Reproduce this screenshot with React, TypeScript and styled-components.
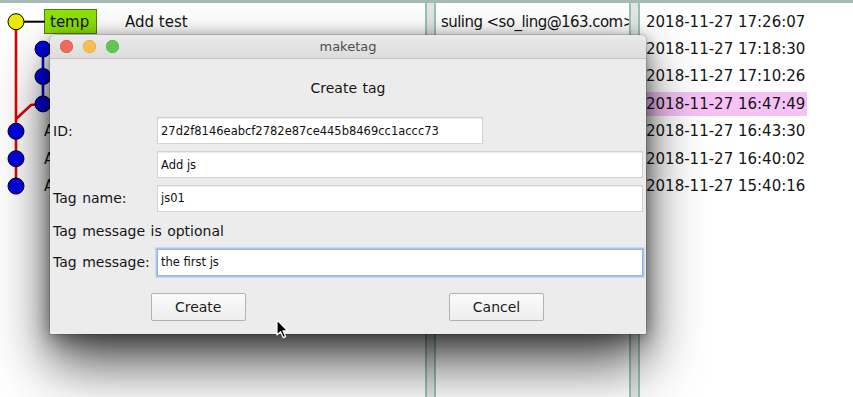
import React from "react";
import styled, { createGlobalStyle } from "styled-components";

const GlobalStyle = createGlobalStyle`
  html, body { margin: 0; padding: 0; background: #ffffff; }
  body { font-family: "DejaVu Sans", "Liberation Sans", sans-serif; }
  * { box-sizing: border-box; }
`;

const Screen = styled.div`
  position: relative;
  width: 853px;
  height: 397px;
  overflow: hidden;
  background: #ffffff;
  display: flex;
  flex-direction: column;
`;

const TopEdge = styled.div`
  flex: none;
  height: 3px;
  background: #a5bcb5;
`;

const Panes = styled.div`
  flex: 1;
  display: flex;
  min-height: 0;
`;

const Pane = styled.div<{ $width?: number; $borderLeft?: boolean; $borderRight?: boolean; $padLeft: number }>`
  position: relative;
  flex: ${(p) => (p.$width ? `0 0 ${p.$width}px` : "1 1 auto")};
  background: #ffffff;
  border-left: ${(p) => (p.$borderLeft ? "2px solid #96c4b6" : "none")};
  border-right: ${(p) => (p.$borderRight ? "2px solid #96c4b6" : "none")};
  overflow: hidden;
  padding-top: 5px;
  padding-left: ${(p) => p.$padLeft}px;
  font-size: 15px;
  color: #141414;
`;

const Sash = styled.div`
  flex: 0 0 7px;
  background: #e2e6e4;
`;

const Row = styled.div<{ $indent?: number; $tight?: boolean }>`
  display: flex;
  align-items: center;
  height: 27.4px;
  padding-left: ${(p) => p.$indent ?? 0}px;
  white-space: nowrap;
  letter-spacing: ${(p) => (p.$tight ? "-0.55px" : "0")};
`;

const TagBox = styled.span`
  display: inline-flex;
  align-items: center;
  width: 53px;
  height: 25px;
  padding-left: 5px;
  background: #8ee204;
  border: 1px solid #557f08;
  color: #111;
  margin-right: 28px;
`;

const DateCell = styled.span<{ $hi?: boolean }>`
  display: inline-block;
  height: 24px;
  line-height: 24px;
  padding: 0 2px 0 3px;
  background: ${(p) => (p.$hi ? "#f6c2f6" : "transparent")};
`;

const Graph = styled.svg`
  position: absolute;
  left: 0;
  top: 0;
`;

/* ---------- dialog ---------- */

const Dialog = styled.div`
  position: absolute;
  z-index: 2;
  left: 50px;
  top: 35px;
  width: 596px;
  height: 299px;
  display: flex;
  flex-direction: column;
  border-radius: 5px 5px 0 0;
  background: #ececec;
  box-shadow: 0 0 0 1px rgba(0, 0, 0, 0.14), 0 0 14px rgba(0, 0, 0, 0.22),
    0 10px 22px rgba(0, 0, 0, 0.3), 0 30px 56px rgba(0, 0, 0, 0.68);
`;

const TitleBar = styled.div`
  flex: none;
  height: 24px;
  display: grid;
  grid-template-columns: 1fr auto 1fr;
  align-items: center;
  border-radius: 5px 5px 0 0;
  background: linear-gradient(#ebebeb, #dcdcdc);
  border-bottom: 1px solid #c4c4c4;
`;

const Lights = styled.div`
  display: flex;
  gap: 10px;
  padding-left: 9.5px;
`;

const Light = styled.span<{ $color: string; $edge: string }>`
  width: 13px;
  height: 13px;
  border-radius: 50%;
  background: ${(p) => p.$color};
  box-shadow: inset 0 0 0 0.5px ${(p) => p.$edge};
`;

const Title = styled.div`
  font-size: 13px;
  color: #4e4e4e;
`;

const Body = styled.div`
  flex: 1;
  display: flex;
  flex-direction: column;
  padding: 20px 3px 13px 3px;
  font-size: 14px;
  word-spacing: 1px;
  color: #161616;
`;

const Heading = styled.div`
  text-align: center;
  line-height: 18px;
`;

const FieldRow = styled.div<{ $gap: number }>`
  display: grid;
  grid-template-columns: 104px 1fr;
  align-items: center;
  margin-top: ${(p) => p.$gap}px;
`;

const Label = styled.div`
  line-height: 18px;
  white-space: nowrap;
`;

const Note = styled.div<{ $gap: number }>`
  line-height: 18px;
  margin-top: ${(p) => p.$gap}px;
`;

const Field = styled.input<{ $width?: number; $focus?: boolean }>`
  display: block;
  width: ${(p) => (p.$width ? `${p.$width}px` : "100%")};
  height: 27px;
  margin: 0;
  padding: 0 3px;
  border: 1px solid ${(p) => (p.$focus ? "#94b6e6" : "#d2d2d2")};
  box-shadow: ${(p) => (p.$focus ? "0 0 0 1.5px #a9c5ee" : "inset 0 1px 0 #ececec")};
  background: #ffffff;
  font-family: "DejaVu Sans", "Liberation Sans", sans-serif;
  font-size: 11.5px;
  word-spacing: 0;
  color: #111;
  outline: none;
`;

const ButtonRow = styled.div<{ $gap: number }>`
  display: flex;
  justify-content: space-between;
  padding: 0 99px 0 97.7px;
  margin-top: ${(p) => p.$gap}px;
`;

const Button = styled.button`
  width: 95px;
  height: 28px;
  margin: 0;
  padding: 0;
  border: 1px solid #b2b2b2;
  border-radius: 2px;
  background: linear-gradient(#fbfbfb, #eeeeee);
  font-family: "DejaVu Sans", "Liberation Sans", sans-serif;
  font-size: 14px;
  color: #1c1c1c;
`;

const Cursor = styled.svg`
  position: absolute;
  z-index: 3;
  left: 276px;
  top: 319px;
`;

const leftRows = [
  { indent: 70, text: "Add css" },
  { indent: 70, text: "Add html" },
  { indent: 70, text: "Add readme" },
  { indent: 44, text: "Add index" },
  { indent: 44, text: "Add main" },
  { indent: 44, text: "Add a.txt" },
];

const dates = [
  "2018-11-27 17:26:07",
  "2018-11-27 17:18:30",
  "2018-11-27 17:10:26",
  "2018-11-27 16:47:49",
  "2018-11-27 16:43:30",
  "2018-11-27 16:40:02",
  "2018-11-27 15:40:16",
];

const ys = [18.7, 46.1, 73.5, 100.9, 128.3, 155.7, 183.1];

export default function App() {
  return (
    <>
      <GlobalStyle />
      <Screen>
        <TopEdge />
        <Panes>
          <Pane $width={427} $borderRight $padLeft={0}>
            <Graph width="60" height="200" viewBox="0 0 60 200">
              <line x1="16" y1={ys[0]} x2="16" y2={ys[6]} stroke="#e00000" strokeWidth="2.6" />
              <polyline points={`16,116 31,102 43,${ys[3]}`} fill="none" stroke="#e00000" strokeWidth="2.6" />
              <line x1="43" y1={ys[1]} x2="43" y2={ys[3]} stroke="#0000e0" strokeWidth="2.6" />
              <line x1="22" y1={ys[0]} x2="45" y2={ys[0]} stroke="#000" strokeWidth="2" />
              <circle cx="16" cy={ys[0]} r="8" fill="#eeea00" stroke="#000" strokeWidth="1" />
              {[1, 2, 3].map((i) => (
                <circle key={i} cx="43" cy={ys[i]} r="8" fill="#0000e8" stroke="#000" strokeWidth="1" />
              ))}
              {[4, 5, 6].map((i) => (
                <circle key={i} cx="16" cy={ys[i]} r="8" fill="#0000e8" stroke="#000" strokeWidth="1" />
              ))}
            </Graph>
            <Row $indent={44}>
              <TagBox>temp</TagBox>
              Add test
            </Row>
            {leftRows.map((r) => (
              <Row key={r.text} $indent={r.indent}>
                {r.text}
              </Row>
            ))}
          </Pane>
          <Sash />
          <Pane $width={197} $borderLeft $borderRight $padLeft={5}>
            {dates.map((d) => (
              <Row key={d} $tight>
                suling &lt;so_ling@163.com&gt;
              </Row>
            ))}
          </Pane>
          <Sash />
          <Pane $borderLeft $padLeft={3}>
            {dates.map((d, i) => (
              <Row key={d}>
                <DateCell $hi={i === 3}>{d}</DateCell>
              </Row>
            ))}
          </Pane>
        </Panes>

        <Dialog>
          <TitleBar>
            <Lights>
              <Light $color="#ee6a5f" $edge="#d9534a" />
              <Light $color="#f6be50" $edge="#dea23a" />
              <Light $color="#62c655" $edge="#4fae44" />
            </Lights>
            <Title>maketag</Title>
            <span />
          </TitleBar>
          <Body>
            <Heading>Create tag</Heading>
            <FieldRow $gap={20.3}>
              <Label>ID:</Label>
              <Field readOnly $width={326} value="27d2f8146eabcf2782e87ce445b8469cc1accc73" />
            </FieldRow>
            <FieldRow $gap={7}>
              <Label />
              <Field readOnly value="Add js" />
            </FieldRow>
            <FieldRow $gap={6.4}>
              <Label>Tag name:</Label>
              <Field readOnly value="js01" />
            </FieldRow>
            <Note $gap={10.3}>Tag message is optional</Note>
            <FieldRow $gap={9}>
              <Label>Tag message:</Label>
              <Field readOnly $focus value="the first js" />
            </FieldRow>
            <ButtonRow $gap={17}>
              <Button>Create</Button>
              <Button>Cancel</Button>
            </ButtonRow>
          </Body>
        </Dialog>

        <Cursor width="13" height="21" viewBox="0 0 13 21">
          <path
            d="M1 1 L1 16 L4.6 12.6 L7.2 18.6 L9.6 17.6 L7 11.8 L11.6 11.8 Z"
            fill="#000"
            stroke="#fff"
            strokeWidth="1.2"
            strokeLinejoin="round"
          />
        </Cursor>
      </Screen>
    </>
  );
}
